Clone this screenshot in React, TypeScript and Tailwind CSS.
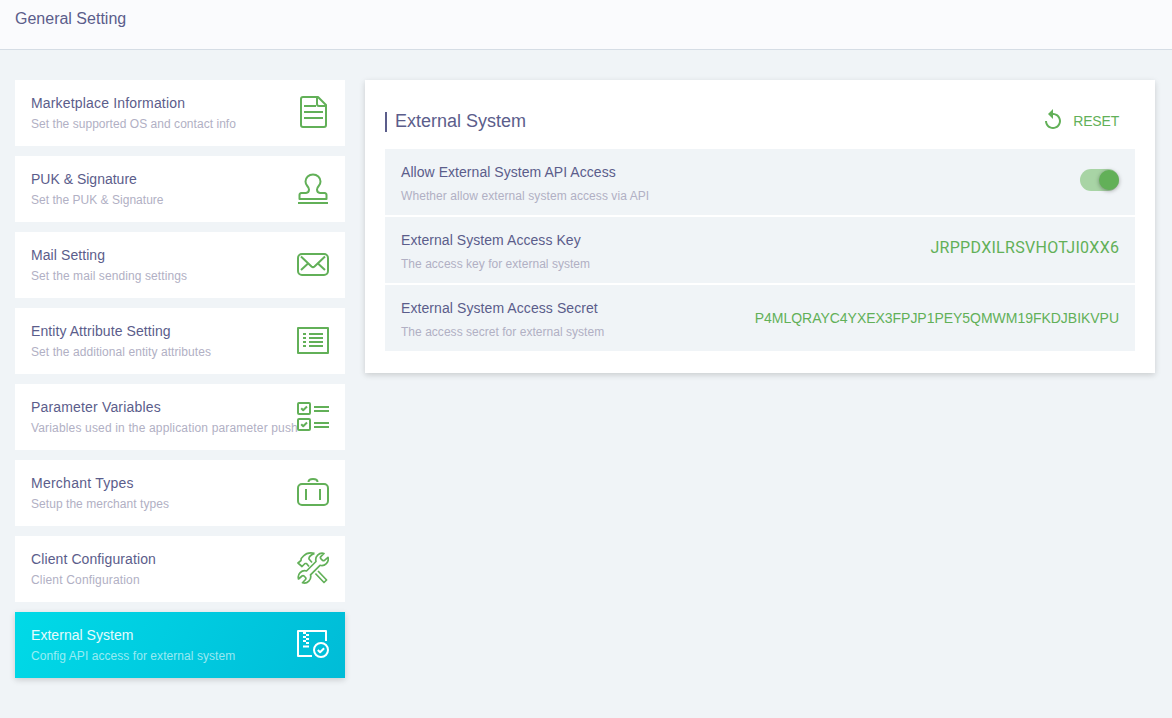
import type { ReactNode } from 'react';

function Icon({ children }: { children: ReactNode }) {
  return (
    <svg
      viewBox="0 0 32 32"
      className="-ml-8 size-8 shrink-0"
      fill="none"
      stroke="currentColor"
      strokeWidth="2"
      strokeLinecap="butt"
      strokeLinejoin="round"
    >
      {children}
    </svg>
  );
}

const documentIcon = (
  <Icon>
    <path d="M6 1h15l8 8v20a2 2 0 0 1-2 2H6a2 2 0 0 1-2-2V3a2 2 0 0 1 2-2z" />
    <path d="M20 1v7a2 2 0 0 0 2 2h7M7 10h12M7 16h19M7 22h19" />
  </Icon>
);

const stampIcon = (
  <Icon>
    <path d="M2.500 27v-4q0-1.800 2-2H9q3-.3 3-3.500Q12 16 10.300 14Q8.500 11.800 8.500 9.500a7.300 6.800 0 0 1 15 0q0 2.300-1.800 4.500Q20 16 20 17.500q0 3.200 3 3.500h4.500q2 .2 2 2v4zM1 31h30" />
  </Icon>
);

const mailIcon = (
  <Icon>
    <rect x="1" y="6" width="30" height="21" rx="4" />
    <path d="M4 8.500l10.500 10q1.500 1.300 3 0L28 8.500M4 22l6.500-6M28 22l-6.500-6" />
  </Icon>
);

const listIcon = (
  <Icon>
    <rect x="1" y="4" width="30" height="25" />
    <path d="M6 10h3M6 14h3M6 18h3M6 22h3M12 10h14M12 14h14M12 18h14M12 22h14" />
  </Icon>
);

const checklistIcon = (
  <Icon>
    <rect x="1" y="3" width="12" height="11" rx="1" />
    <rect x="1" y="19" width="12" height="11" rx="1" />
    <path d="M4.200 8.200l2 2L10 6.500M4.200 24.200l2 2L10 22.500M17 7h15M17 11h15M17 23h15M17 27h15" />
  </Icon>
);

const caseIcon = (
  <Icon>
    <rect x="1" y="8" width="30" height="21" rx="4" />
    <path d="M11.500 6q0-3 4.500-3t4.500 3M9 13v11M23 13v11" />
  </Icon>
);

const toolsIcon = (
  <Icon>
    <g strokeWidth="1.700">
      <path d="M17.500 1.400C12.500.2 9 1.300 6.500 4L4.200 6.500 4 8.500 1 11l4 3.500 3-3h1.500l2.500 3M17.500 1.400Q11.500 4 12 7l3 3.500" />
      <path d="M27 1.500a6.500 6.500 0 0 0-8 8L9.500 19a6.500 6.500 0 0 0-8 8L5 24q1-.8 2 0l1.500 1.500q.8 1 0 2l-3 3.300a6.500 6.500 0 0 0 8-8l9.500-9.500a6.500 6.500 0 0 0 8-8l-3.500 3q-1 .8-2 0l-1.700-1.700q-.8-1 0-2z" />
      <path d="M21 19l8.600 9-2.600 2.500-8.600-9" />
    </g>
  </Icon>
);

const externalIcon = (
  <Icon>
    <path d="M29 13V3H1v25h14" strokeLinejoin="round" />
    <path d="M6 5h3M9 7h3M6 9h3M9 11h3M6 13h3M9 15h3M6 18.500h6" />
    <circle cx="24" cy="22" r="7" />
    <path d="M20.800 22l2.300 2.200 4-4" />
  </Icon>
);

interface SettingItem {
  title: string;
  titleClass: string;
  text: string;
  textClass: string;
  icon: ReactNode;
  active?: boolean;
}

const items: SettingItem[] = [
  { title: 'Marketplace Information', titleClass: 'tracking-[0.17px]', text: 'Set the supported OS and contact info', textClass: 'tracking-[0.04px]', icon: documentIcon },
  { title: 'PUK & Signature', titleClass: '', text: 'Set the PUK & Signature', textClass: 'tracking-[0.02px]', icon: stampIcon },
  { title: 'Mail Setting', titleClass: 'tracking-[0.08px]', text: 'Set the mail sending settings', textClass: 'tracking-[0.09px]', icon: mailIcon },
  { title: 'Entity Attribute Setting', titleClass: 'tracking-[0.08px]', text: 'Set the additional entity attributes', textClass: 'tracking-[0.07px]', icon: listIcon },
  { title: 'Parameter Variables', titleClass: 'tracking-[0.17px]', text: 'Variables used in the application parameter push', textClass: 'tracking-[0.16px]', icon: checklistIcon },
  { title: 'Merchant Types', titleClass: 'tracking-[0.25px]', text: 'Setup the merchant types', textClass: 'tracking-[0.05px]', icon: caseIcon },
  { title: 'Client Configuration', titleClass: 'tracking-[0.1px]', text: 'Client Configuration', textClass: 'tracking-[0.17px]', icon: toolsIcon },
  { title: 'External System', titleClass: 'tracking-[0.04px]', text: 'Config API access for external system', textClass: 'tracking-[0.06px]', icon: externalIcon, active: true },
];

function Card({ item }: { item: SettingItem }) {
  const look = item.active
    ? 'bg-linear-[120deg] from-[#00dae7] via-[#00cbe0] to-[#00bcd7] text-white shadow-[0_2px_6px_rgba(0,0,0,0.16)]'
    : 'bg-white text-[#62b058]';
  return (
    <a className={`flex h-[66px] items-start px-4 pt-4 ${look}`}>
      <div className="min-w-0 flex-1 whitespace-nowrap">
        <div className={`text-[14px] leading-[14px] ${item.active ? 'text-white/90' : 'text-[#5b5d8b]'}`}>
          <span className={item.titleClass}>{item.title}</span>
        </div>
        <div className={`mt-[7px] text-[12px] leading-[14px] ${item.active ? 'text-white/60' : 'text-[#b1b0c4]'}`}>
          <span className={item.textClass}>{item.text}</span>
        </div>
      </div>
      {item.icon}
    </a>
  );
}

function Row({ title, text, children }: { title: ReactNode; text: ReactNode; children: ReactNode }) {
  return (
    <div className="flex h-[66px] justify-between bg-[#f0f4f7] px-4">
      <div className="whitespace-nowrap pt-4">
        <div className="text-[14px] leading-[14px] text-[#5b5d8b]">{title}</div>
        <div className="mt-[10px] text-[12px] leading-[14px] text-[#b1b0c4]">{text}</div>
      </div>
      {children}
    </div>
  );
}

export default function App() {
  return (
    <div className="min-h-[718px] bg-[#f0f4f7] font-['Liberation_Sans',Arial,sans-serif]">
      <header className="h-[50px] border-b border-[#d5dde5] bg-[#fafbfd] px-[15px] pt-[9px] text-[16px] leading-[20px] text-[#5b5d8b]">
        <span>General Setting</span>
      </header>
      <main className="flex items-start gap-5 px-[15px] pt-[30px]">
        <nav className="flex w-[330px] flex-col gap-[10px]">
          {items.map((item) => (
            <Card key={item.title} item={item} />
          ))}
        </nav>
        <section className="h-[293px] w-[790px] bg-white px-5 shadow-[0_2px_6px_rgba(0,0,0,0.16)]">
          <div className="flex h-[69px] items-start justify-between pr-4 pt-8">
            <h1 className="flex h-5 items-start border-l-2 border-[#5b5d8b] pl-2 text-[18px] leading-[18px] text-[#5b5d8b]">
              <span>External System</span>
            </h1>
            <button className="-mt-[4px] flex h-6 items-center gap-2 text-[14px] leading-[14px] text-[#62b058]">
              <svg viewBox="0 0 24 24" className="size-6" fill="currentColor">
                <path d="M12 5V1L7 6l5 5V7c3.310 0 6 2.690 6 6s-2.690 6-6 6-6-2.690-6-6H4c0 4.420 3.580 8 8 8s8-3.580 8-8-3.580-8-8-8z" />
              </svg>
              <span className="pt-[2px] tracking-[-0.2px]">RESET</span>
            </button>
          </div>
          <div className="flex flex-col gap-[2px]">
            <Row
              title={<span className="tracking-[0.05px]">Allow External System API Access</span>}
              text={<span className="tracking-[0.08px]">Whether allow external system access via API</span>}
            >
              <div className="mt-5 flex h-[22px] w-[39px] items-center justify-end rounded-full bg-[#a8d4a5]">
                <div className="size-5 rounded-full bg-[#62b058] shadow-[0_1px_4px_rgba(0,0,0,0.35)]" />
              </div>
            </Row>
            <Row
              title={<span className="tracking-[0.06px]">External System Access Key</span>}
              text={<span className="tracking-[0.03px]">The access key for external system</span>}
            >
              <div className="pt-[22px] font-[Roboto,sans-serif] text-[16px] leading-[18px] text-[#62b058]">
                <span className="-mr-[0.3px] tracking-[0.3px]">JRPPDXILRSVHOTJI0XX6</span>
              </div>
            </Row>
            <Row
              title={<span className="tracking-[0.08px]">External System Access Secret</span>}
              text={<span className="tracking-[0.03px]">The access secret for external system</span>}
            >
              <div className="pt-6 text-[14px] leading-[18px] text-[#62b058]">
                <span className="tracking-[-0.03px]">P4MLQRAYC4YXEX3FPJP1PEY5QMWM19FKDJBIKVPU</span>
              </div>
            </Row>
          </div>
        </section>
      </main>
    </div>
  );
}
